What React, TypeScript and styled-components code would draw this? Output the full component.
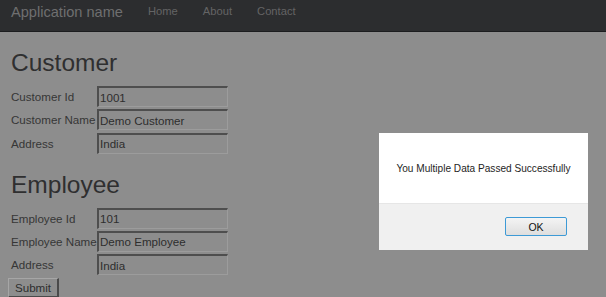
import React from "react";
import styled, { createGlobalStyle } from "styled-components";

const Global = createGlobalStyle`
  html, body { margin: 0; padding: 0; }
  body {
    background: #8d8d8d;
    font-family: "Liberation Sans", Arial, sans-serif;
    color: #333;
    width: 606px;
    height: 297px;
    overflow: hidden;
  }
`;

const NavBar = styled.header`
  height: 31px;
  background: #2c2d2f;
  border-bottom: 1px solid #1c1d1f;
  display: flex;
  align-items: flex-start;
  gap: 25px;
  padding: 0 11px;
  box-sizing: content-box;
`;

const Brand = styled.span`
  font-size: 14.6px;
  line-height: 20px;
  padding-top: 2px;
  color: #6f6f70;
`;

const NavLink = styled.span`
  font-size: 11.2px;
  line-height: 20px;
  padding-top: 1px;
  color: #646465;
`;

const Main = styled.main`
  padding: 16px 11px 0;
  display: flex;
  flex-direction: column;
  align-items: flex-start;
`;

const Heading = styled.h2`
  margin: 0 0 8px;
  font-size: 24.5px;
  line-height: 30px;
  font-weight: normal;
  color: #2f2f30;
`;

const FormGrid = styled.div<{ $last?: boolean }>`
  display: grid;
  grid-template-columns: 86px 131px;
  row-gap: 2.3px;
  align-items: center;
  margin-bottom: ${(p) => (p.$last ? "2.7px" : "16px")};
`;

const Label = styled.span`
  font-size: 11.6px;
  color: #363636;
  white-space: nowrap;
`;

const Field = styled.div`
  height: 21px;
  box-sizing: border-box;
  border-top: 2px solid #4e4e4e;
  border-left: 2px solid #4e4e4e;
  border-right: 1px solid #9c9c9c;
  border-bottom: 1px solid #9c9c9c;
  display: flex;
  align-items: center;
  padding-left: 1px;
  font-size: 11.6px;
  color: #2e2e2e;
`;

const SubmitButton = styled.div`
  margin-left: -3px;
  width: 51px;
  height: 20px;
  box-sizing: border-box;
  border-top: 1px solid #a6a6a6;
  border-left: 1px solid #a6a6a6;
  border-right: 2px solid #4a4a4a;
  border-bottom: 2px solid #4a4a4a;
  display: flex;
  align-items: center;
  justify-content: center;
  font-size: 11.6px;
  color: #2e2e2e;
`;

const Dialog = styled.div`
  position: absolute;
  left: 379px;
  top: 133px;
  width: 209px;
  height: 117px;
  display: flex;
  flex-direction: column;
  background: #ffffff;
`;

const DialogBody = styled.div`
  height: 70px;
  display: flex;
  align-items: center;
  justify-content: center;
  font-size: 10.1px;
  color: #1e1e1e;
`;

const DialogFooter = styled.div`
  flex: 1;
  background: #f0f0f0;
  border-top: 1px solid #e6e6e6;
  display: flex;
  justify-content: flex-end;
  align-items: flex-start;
  padding: 13px 21px 0 0;
`;

const OkButton = styled.div`
  width: 62px;
  height: 19px;
  box-sizing: border-box;
  border: 1px solid #3d9ad6;
  border-radius: 2px;
  background: linear-gradient(#f4f4f4, #dedede);
  display: flex;
  align-items: center;
  justify-content: center;
  font-size: 10.5px;
  color: #111;
`;

const customer = [
  ["Customer Id", "1001"],
  ["Customer Name", "Demo Customer"],
  ["Address", "India"],
];

const employee = [
  ["Employee Id", "101"],
  ["Employee Name", "Demo Employee"],
  ["Address", "India"],
];

export default function App() {
  return (
    <>
      <Global />
      <NavBar>
        <Brand>Application name</Brand>
        <NavLink>Home</NavLink>
        <NavLink>About</NavLink>
        <NavLink>Contact</NavLink>
      </NavBar>
      <Main>
        <Heading>Customer</Heading>
        <FormGrid>
          {customer.map(([l, v]) => (
            <React.Fragment key={l}>
              <Label>{l}</Label>
              <Field>{v}</Field>
            </React.Fragment>
          ))}
        </FormGrid>
        <Heading>Employee</Heading>
        <FormGrid $last>
          {employee.map(([l, v]) => (
            <React.Fragment key={l}>
              <Label>{l}</Label>
              <Field>{v}</Field>
            </React.Fragment>
          ))}
        </FormGrid>
        <SubmitButton>Submit</SubmitButton>
      </Main>
      <Dialog>
        <DialogBody>You Multiple Data Passed Successfully</DialogBody>
        <DialogFooter>
          <OkButton>OK</OkButton>
        </DialogFooter>
      </Dialog>
    </>
  );
}
